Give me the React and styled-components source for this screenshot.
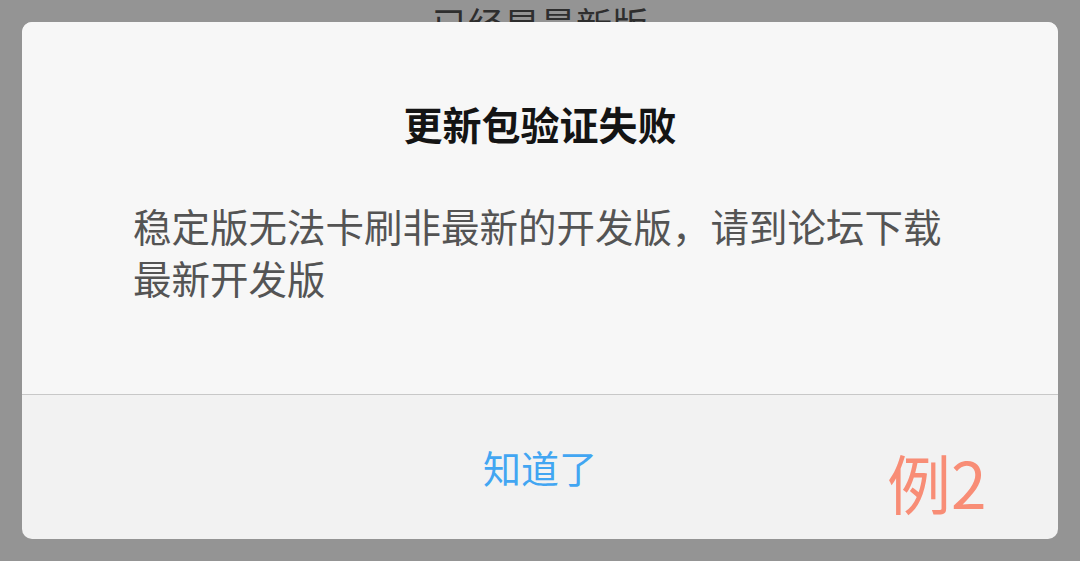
import React from 'react';
import styled, { createGlobalStyle } from 'styled-components';

const GlobalStyle = createGlobalStyle`
  html, body {
    margin: 0;
    padding: 0;
    background: #949494;
  }
  body {
    font-family: "Noto Sans CJK SC", "Noto Sans", sans-serif;
  }
`;

const Screen = styled.div`
  position: relative;
  width: 1080px;
  height: 561px;
  overflow: hidden;
  background: #949494;
`;

const BehindText = styled.div`
  padding-top: 3px;
  text-align: center;
  font-size: 36px;
  line-height: 40px;
  color: #2e2e2e;
`;

const Dialog = styled.div`
  position: absolute;
  top: 22px;
  left: 22px;
  right: 22px;
  bottom: 22px;
  display: flex;
  flex-direction: column;
  border-radius: 10px;
  overflow: hidden;
  background: #f2f2f2;
`;

const Content = styled.div`
  height: 373px;
  box-sizing: border-box;
  padding: 75px 100px 0 111px;
  background: #f7f7f7;
  border-bottom: 1px solid #c8c8c8;
`;

const Title = styled.h2`
  margin: 0 0 50px -11px;
  text-align: center;
  font-size: 39px;
  line-height: 52px;
  font-weight: 700;
  color: #141414;
`;

const Message = styled.p`
  margin: 0;
  font-size: 38.5px;
  line-height: 52px;
  color: #545454;
`;

const Footer = styled.div`
  position: relative;
  flex: 1;
  display: flex;
  align-items: center;
  justify-content: center;
`;

const ActionButton = styled.button`
  border: 0;
  background: none;
  padding: 0;
  font-family: inherit;
  font-size: 38px;
  line-height: 52px;
  color: #42a6f2;
  cursor: pointer;
`;

const Label = styled.span`
  position: absolute;
  left: 865px;
  top: 46px;
  font-size: 64px;
  line-height: 80px;
  color: #f88d76;
`;

export default function App() {
  return (
    <Screen>
      <GlobalStyle />
      <BehindText>已经是最新版</BehindText>
      <Dialog>
        <Content>
          <Title>更新包验证失败</Title>
          <Message>稳定版无法卡刷非最新的开发版，请到论坛下载最新开发版</Message>
        </Content>
        <Footer>
          <ActionButton>知道了</ActionButton>
          <Label>例2</Label>
        </Footer>
      </Dialog>
    </Screen>
  );
}
